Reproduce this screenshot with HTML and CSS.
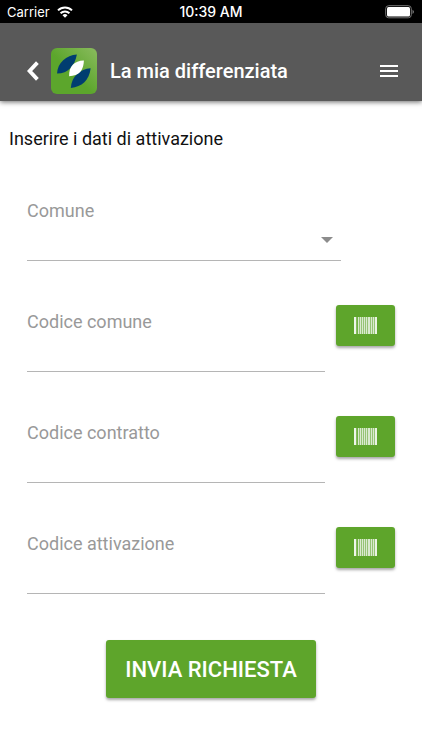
FILE: index.html
```html
<!DOCTYPE html>
<html lang="it">
<head>
<meta charset="utf-8">
<meta name="viewport" content="width=device-width, initial-scale=1">
<title>La mia differenziata</title>
<link rel="stylesheet" href="styles.css">
</head>
<body>
<svg class="defs" aria-hidden="true">
  <symbol id="barcode" viewBox="0 0 23 17">
    <path fill="#fff" opacity=".35" d="M4 0h19v17H4z"/>
    <path fill="#fff" opacity=".9" d="M0 0h2v17H0z"/>
    <path fill="#fff" opacity=".65" d="M2.6 0h.6v17h-.6zM4 0h1v17H4zM6 0h1v17H6zM8 0h1v17H8zM10 0h1v17h-1zM12 0h1v17h-1zM14 0h2v17h-2zM17 0h1v17h-1zM19 0h1v17h-1z"/>
    <path fill="#fff" opacity=".8" d="M21 0h2v17h-2z"/>
  </symbol>
</svg>
<div class="status">
  <div class="status-side">
    <span>Carrier</span>
    <svg class="wifi" viewBox="0 0 16 12" aria-hidden="true">
      <g fill="none" stroke="#fff" stroke-width="2">
        <path d="M1 4.4a10 10 0 0 1 14 0"/>
        <path d="M3.6 7.2a6.3 6.3 0 0 1 8.8 0"/>
      </g>
      <path fill="#fff" d="M5.5 9.2a3.6 3.6 0 0 1 5 0L8 11.8z"/>
    </svg>
  </div>
  <span class="clock">10:39 AM</span>
  <div class="status-side status-end">
    <svg class="battery" viewBox="0 0 30 14" aria-hidden="true">
      <rect x=".7" y=".7" width="25.6" height="12.1" rx="3" fill="none" stroke="#777"/>
      <rect x="2" y="2" width="23" height="9.5" rx="1.5" fill="#fff"/>
      <path fill="#777" d="M27.5 4.7c2 .8 2 3.4 0 4.2z"/>
    </svg>
  </div>
</div>
<header class="header">
  <button class="icon-button" type="button" aria-label="Indietro">
    <svg class="chevron" viewBox="0 0 12 20" aria-hidden="true"><path fill="none" stroke="#fff" stroke-width="3.8" d="M10.4 1.6L2.6 10l7.8 8.4"/></svg>
  </button>
  <svg class="logo" viewBox="0 0 137 137" aria-hidden="true">
    <defs>
      <linearGradient id="shine" x1="0" y1="1" x2="1" y2="0">
        <stop offset=".45" stop-color="#5ca62c"/>
        <stop offset="1" stop-color="#8abb5e"/>
      </linearGradient>
    </defs>
    <rect width="137" height="137" rx="18" fill="url(#shine)"/>
    <path fill="#003d70" d="M77 19C46 21 19 43 18 76C51 76 71 53 77 19z"/>
    <path fill="#003d70" d="M118 60C87 62 61 84 59 119C92 115 114 96 118 60z"/>
    <path fill="#fff" d="M98 37C69 38 53 54 54 84C84 82 97 67 98 37z"/>
  </svg>
  <h1 class="title">La mia differenziata</h1>
  <button class="icon-button" type="button" aria-label="Menu">
    <svg class="menu" viewBox="0 0 18 12" aria-hidden="true"><path fill="#fff" d="M0 0h18v2H0zM0 5h18v2H0zM0 10h18v2H0z"/></svg>
  </button>
</header>
<main class="main">
  <p class="intro">Inserire i dati di attivazione</p>
  <form class="form">
    <div class="row row-select">
      <div class="field">
        <label for="comune">Comune</label>
        <div class="select-box">
          <select id="comune"><option value=""></option></select>
          <svg class="caret" viewBox="0 0 12 6" aria-hidden="true"><path fill="#8c8c8c" d="M0 0h12L6 6z"/></svg>
        </div>
      </div>
    </div>
    <div class="row">
      <div class="field">
        <label for="codice-comune">Codice comune</label>
        <input id="codice-comune" type="text">
      </div>
      <button class="green scan" type="button" aria-label="Scansiona codice comune"><svg class="barcode"><use href="#barcode"/></svg></button>
    </div>
    <div class="row">
      <div class="field">
        <label for="codice-contratto">Codice contratto</label>
        <input id="codice-contratto" type="text">
      </div>
      <button class="green scan" type="button" aria-label="Scansiona codice contratto"><svg class="barcode"><use href="#barcode"/></svg></button>
    </div>
    <div class="row">
      <div class="field">
        <label for="codice-attivazione">Codice attivazione</label>
        <input id="codice-attivazione" type="text">
      </div>
      <button class="green scan" type="button" aria-label="Scansiona codice attivazione"><svg class="barcode"><use href="#barcode"/></svg></button>
    </div>
    <button class="green submit" type="submit">INVIA RICHIESTA</button>
  </form>
</main>
</body>
</html>
```
FILE: styles.css
```css
* {
  box-sizing: border-box;
}

body {
  margin: 0;
  background: #fff;
  color: #111;
  font-family: Roboto, "Liberation Sans", sans-serif;
}

button {
  border: 0;
  padding: 0;
  color: #fff;
  font-family: inherit;
  cursor: pointer;
}

svg {
  display: block;
  flex: none;
}

.defs {
  position: absolute;
  width: 0;
  height: 0;
}

.status {
  display: flex;
  align-items: center;
  height: 23px;
  padding: 0 7px;
  background: #000;
  color: #fff;
  font-family: Inter, sans-serif;
  font-size: 13px;
}

.status-side {
  display: flex;
  flex: 1;
  align-items: center;
  gap: 7px;
}

.status-end {
  justify-content: flex-end;
}

.clock {
  font-size: 14px;
  font-weight: 500;
}

.wifi {
  width: 16px;
  height: 12px;
}

.battery {
  width: 30px;
  height: 14px;
}

.header {
  display: flex;
  align-items: center;
  height: 78px;
  padding: 18px 24px 0 27px;
  background: #595959;
  box-shadow: 0 1px 5px rgba(0, 0, 0, 0.6);
}

.icon-button {
  background: none;
}

.chevron {
  width: 12px;
  height: 20px;
}

.logo {
  width: 46px;
  height: 46px;
  margin: 0 13px 0 12px;
}

.title {
  flex: 1;
  margin: 0;
  color: #fff;
  font-size: 20px;
  font-weight: 500;
}

.menu {
  width: 18px;
  height: 12px;
}

.main {
  padding: 26px 9px;
}

.intro {
  margin: 0;
  font-size: 18px;
  line-height: 24px;
}

.form {
  display: flex;
  flex-direction: column;
  padding: 43px 18px 0;
}

.row {
  display: flex;
  align-items: flex-start;
  gap: 11px;
  height: 111px;
}

.row-select {
  padding-right: 54px;
}

.field {
  display: flex;
  flex: 1;
  flex-direction: column;
  min-width: 0;
  padding-top: 5px;
}

.field label {
  color: #999;
  font-size: 18px;
  line-height: 24px;
}

.field input,
.field select {
  width: 100%;
  height: 38px;
  padding: 0;
  border: 0;
  border-bottom: 1px solid #b5b5b5;
  border-radius: 0;
  background: none;
  color: #111;
  font: inherit;
  font-size: 18px;
  appearance: none;
}

.select-box {
  display: grid;
  align-items: center;
}

.select-box > * {
  grid-area: 1 / 1;
}

.caret {
  justify-self: end;
  width: 12px;
  height: 6px;
  margin: 0 8px 4px 0;
  pointer-events: none;
}

.green {
  display: flex;
  align-items: center;
  justify-content: center;
  border-radius: 3px;
  background: #5ea52b;
  box-shadow: 0 2px 3px rgba(0, 0, 0, 0.35);
}

.scan {
  width: 59px;
  height: 41px;
}

.barcode {
  width: 23px;
  height: 17px;
}

.submit {
  align-self: center;
  height: 58px;
  margin-top: 2px;
  padding: 0 19px;
  font-size: 22px;
  font-weight: 500;
}
```
